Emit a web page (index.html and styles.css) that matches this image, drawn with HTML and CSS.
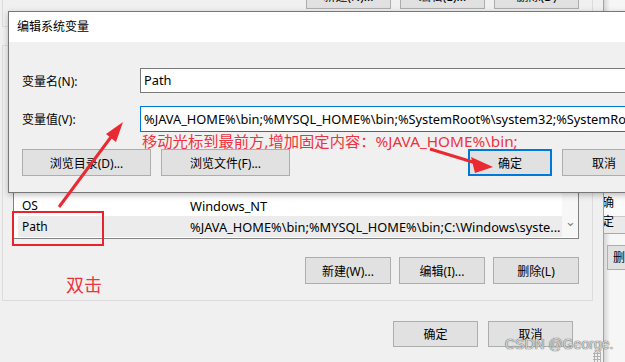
FILE: index.html
```html
<!DOCTYPE html>
<html lang="zh-CN">
<head>
    <meta charset="UTF-8">
    <title>编辑系统变量</title>
    <link rel="stylesheet" href="styles.css">
</head>
<body>

<div class="desk">
    <!-- Environment variables window (behind) -->
    <div class="main">
        <div class="group user">
            <div class="btn-row">
                <span class="btn w85">新建(N)...</span>
                <span class="btn w85">编辑(E)...</span>
                <span class="btn w85">删除(D)</span>
            </div>
        </div>

        <div class="group system">
            <div class="list">
                <div class="rows">
                    <div class="row"><span class="col-name">NUMBER_OF_PROCESSORS</span><span class="col-val">8</span></div>
                    <div class="row"><span class="col-name">OS</span><span class="col-val">Windows_NT</span></div>
                    <div class="row selected"><span class="col-name">Path</span><span class="col-val">%JAVA_HOME%\bin;%MYSQL_HOME%\bin;C:\Windows\syste...</span></div>
                </div>
                <div class="scroll"><span class="chev">&#8964;</span></div>
            </div>
            <div class="btn-row sys-btns">
                <span class="btn w86">新建(W)...</span>
                <span class="btn w86">编辑(I)...</span>
                <span class="btn w86">删除(L)</span>
            </div>
        </div>

        <div class="footer">
            <span class="btn w85">确定</span>
            <span class="btn w85">取消</span>
        </div>
    </div>

    <!-- System properties window edge -->
    <div class="side">
        <div class="side-ok">确定</div>
        <div class="side-band"></div>
        <div class="side-btn">删除</div>
    </div>

    <!-- Edit dialog -->
    <div class="dialog">
        <div class="title">编辑系统变量</div>
        <div class="dlg-body">
            <div class="field">
                <label class="field-label">变量名(N):</label>
                <div class="input">Path</div>
            </div>
            <div class="field">
                <label class="field-label">变量值(V):</label>
                <div class="input focus">%JAVA_HOME%\bin;%MYSQL_HOME%\bin;%SystemRoot%\system32;%SystemRoot%\System32\Wbem</div>
            </div>
            <div class="dlg-btns">
                <span class="btn w129">浏览目录(D)...</span>
                <span class="btn w129">浏览文件(F)...</span>
                <span class="btn w84 default">确定</span>
                <span class="btn w84">取消</span>
            </div>
        </div>
    </div>

    <!-- Annotations -->
    <div class="note">移动光标到最前方,增加固定内容：%JAVA_HOME%\bin;</div>
    <div class="mark"></div>
    <div class="dbl">双击</div>
    <svg class="arrows" width="625" height="362" viewBox="0 0 625 362">
        <line x1="59" y1="207" x2="114" y2="133" stroke="#ea2a33" stroke-width="3"/>
        <polygon points="123,122 116,142 106,134" fill="#ea2a33"/>
        <line x1="430" y1="149" x2="476" y2="163" stroke="#ea2a33" stroke-width="3"/>
        <polygon points="493,167 471,157 475,173" fill="#ea2a33"/>
    </svg>
    <div class="watermark">CSDN @George.</div>
    <div class="grip"></div>
</div>

</body>
</html>
```

FILE: styles.css
```css
body {
    margin: 0;
    font-family: "Noto Sans", "Noto Sans CJK SC", sans-serif;
    font-size: 12px;
    color: #000;
}

.desk {
    position: relative;
    width: 625px;
    height: 362px;
    overflow: hidden;
    display: flex;
    background-color: #f0f0f0;
}

/* main window */

.main {
    width: 603px;
    height: 362px;
    border-right: 1px solid #a3a3a3;
    background-color: #f0f0f0;
    flex-shrink: 0;
}

.group {
    margin-left: 2px;
    width: 589px;
    border: 1px solid #dcdcdc;
}

.group.user {
    margin-top: -20px;
    padding: 1px 0 17px;
}

.group.system {
    margin-top: 18px;
    padding: 14px 0 16px;
}

.btn-row {
    display: flex;
    justify-content: flex-end;
    gap: 9px;
    padding-right: 13px;
}

.btn {
    display: flex;
    align-items: center;
    justify-content: center;
    height: 27px;
    box-sizing: border-box;
    background-color: #e1e1e1;
    border: 1px solid #adadad;
    white-space: nowrap;
    flex-shrink: 0;
}

.w84 { width: 84px; }
.w85 { width: 85px; }
.w86 { width: 86px; }
.w129 { width: 129px; }

.list {
    margin-left: 10px;
    width: 566px;
    height: 179px;
    box-sizing: border-box;
    border: 1px solid #828282;
    background-color: #fff;
    display: flex;
    padding-bottom: 1px;
}

.rows {
    flex: 1;
    display: flex;
    flex-direction: column;
    justify-content: flex-end;
}

.row {
    display: flex;
    align-items: center;
    height: 21px;
    margin-left: 4px;
    padding-left: 4px;
    white-space: nowrap;
    overflow: hidden;
}

.row.selected {
    background-color: #ececec;
}

.col-name {
    width: 168px;
    flex-shrink: 0;
}

.col-val {
    font-size: 12.8px;
}

.scroll {
    width: 16px;
    display: flex;
    align-items: flex-end;
    justify-content: center;
    background-color: #f7f7f7;
}

.chev {
    color: #808080;
    font-size: 13px;
    line-height: 13px;
    margin-bottom: 9px;
}

.sys-btns {
    margin-top: 18px;
    gap: 8px;
}

.footer {
    display: flex;
    justify-content: flex-end;
    gap: 10px;
    padding-right: 30px;
    margin-top: 20px;
}

.footer .btn {
    height: 26px;
}

/* window peeking out on the right */

.side {
    flex: 1;
    background: linear-gradient(to right, #d6d6d6, #f6f6f6 6px);
    padding-top: 193px;
    overflow: hidden;
}

.side-ok {
    height: 23px;
    line-height: 19px;
    margin-left: -2px;
    background-color: #fafafa;
    border-bottom: 1px solid #c8c8c8;
}

.side-band {
    height: 16px;
    background-color: #eaeaea;
    border-bottom: 1px solid #a8a8a8;
}

.side-btn {
    margin: 11px 0 0 3px;
    height: 25px;
    line-height: 23px;
    padding-left: 5px;
    box-sizing: border-box;
    border: 1px solid #adadad;
    border-right: none;
    background-color: #e1e1e1;
    white-space: nowrap;
}

/* dialog */

.dialog {
    position: absolute;
    left: 8px;
    top: 11px;
    width: 660px;
    height: 182px;
    box-sizing: border-box;
    border: 1px solid #777;
    background-color: #f0f0f0;
    box-shadow: 0 2px 6px rgba(0, 0, 0, 0.25);
}

.title {
    height: 30px;
    line-height: 30px;
    padding-left: 8px;
    background-color: #fff;
}

.dlg-body {
    padding: 26px 0 0 13px;
}

.field {
    display: flex;
    align-items: center;
    margin-bottom: 13px;
}

.field-label {
    width: 118px;
    flex-shrink: 0;
}

.input {
    flex: 1;
    height: 25px;
    line-height: 23px;
    box-sizing: border-box;
    padding-left: 3px;
    border: 1px solid #7a7a7a;
    border-right: none;
    background-color: #fff;
    white-space: nowrap;
    overflow: hidden;
    font-size: 12.8px;
}

.input.focus {
    height: 26px;
    line-height: 24px;
    border-color: #0078d7;
}

.dlg-btns {
    display: flex;
    gap: 10px;
    margin-top: 17px;
}

.dlg-btns .default {
    margin-left: 168px;
    border: 2px solid #0078d7;
}

/* annotations */

.note {
    position: absolute;
    left: 142px;
    top: 133px;
    font-size: 15.3px;
    line-height: 16px;
    color: #ee3340;
    white-space: nowrap;
}

.mark {
    position: absolute;
    left: 12px;
    top: 211px;
    width: 92px;
    height: 35px;
    box-sizing: border-box;
    border: 2px solid #e8232d;
}

.dbl {
    position: absolute;
    left: 66px;
    top: 275px;
    font-size: 18px;
    line-height: 20px;
    color: #ee3340;
}

.arrows {
    position: absolute;
    left: 0;
    top: 0;
}

.watermark {
    position: absolute;
    left: 505px;
    top: 336px;
    font-family: "Liberation Sans", Arial, sans-serif;
    font-size: 14px;
    color: #d4d4d4;
    text-shadow: 0 0 1px #666, 0 0 1px #666;
    white-space: nowrap;
}

.grip {
    position: absolute;
    left: 593px;
    top: 352px;
    width: 8px;
    height: 10px;
    background-image: radial-gradient(circle, #b0b0b0 1px, transparent 1.2px);
    background-size: 3px 3px;
}
```
